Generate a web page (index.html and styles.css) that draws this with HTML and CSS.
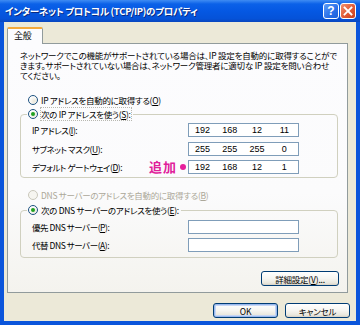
FILE: index.html
```html
<!DOCTYPE html>
<html>
<head>
  <title>インターネット プロトコル (TCP/IP)のプロパティ</title>
  <link rel="stylesheet" href="styles.css">
</head>
<body>
  <div class="window">
    <div class="titlebar">
      <span class="title">インターネット プロトコル (TCP/IP)のプロパティ</span>
      <div class="title-buttons">
        <span class="tb-button help">?</span>
        <span class="tb-button close">
          <svg width="10" height="10" viewBox="0 0 10 10"><path d="M1.5 1.5 L8.5 8.5 M8.5 1.5 L1.5 8.5" stroke="#fff" stroke-width="1.8" stroke-linecap="square"/></svg>
        </span>
      </div>
    </div>

    <div class="client">
      <div class="tabs">
        <span class="tab active">全般</span>
      </div>

      <div class="panel">
        <p class="intro">ネットワークでこの機能がサポートされている場合は、IP 設定を自動的に取得することがで<br>きます。サポートされていない場合は、ネットワーク管理者に適切な IP 設定を問い合わせ<br>てください。</p>

        <div class="radio-row first">
          <span class="radio"></span>
          <span>IP アドレスを自動的に取得する(<u>O</u>)</span>
        </div>

        <fieldset class="group ip-group">
          <legend>
            <span class="radio checked"></span>
            <span class="focus">次の IP アドレスを使う(<u>S</u>):</span>
          </legend>
          <div class="field-row">
            <label>IP アドレス(<u>I</u>):</label>
            <div class="ip-box"><span>192</span><span>168</span><span>12</span><span>11</span></div>
          </div>
          <div class="field-row">
            <label>サブネット マスク(<u>U</u>):</label>
            <div class="ip-box"><span>255</span><span>255</span><span>255</span><span>0</span></div>
          </div>
          <div class="field-row">
            <label>デフォルト ゲートウェイ(<u>D</u>):</label>
            <span class="note">追加</span>
            <span class="note-dot"></span>
            <div class="ip-box"><span>192</span><span>168</span><span>12</span><span>1</span></div>
          </div>
        </fieldset>

        <div class="radio-row disabled dns-auto">
          <span class="radio"></span>
          <span>DNS サーバーのアドレスを自動的に取得する(<u>B</u>)</span>
        </div>

        <fieldset class="group dns-group">
          <legend>
            <span class="radio checked"></span>
            <span>次の DNS サーバーのアドレスを使う(<u>E</u>):</span>
          </legend>
          <div class="field-row">
            <label>優先 DNS サーバー(<u>P</u>):</label>
            <div class="ip-box"></div>
          </div>
          <div class="field-row">
            <label>代替 DNS サーバー(<u>A</u>):</label>
            <div class="ip-box"></div>
          </div>
        </fieldset>

        <div class="advanced-row">
          <button class="xp-button advanced">詳細設定(<u>V</u>)...</button>
        </div>
      </div>

      <div class="dialog-buttons">
        <button class="xp-button default">OK</button>
        <button class="xp-button">キャンセル</button>
      </div>
    </div>
  </div>
</body>
</html>
```

FILE: styles.css
```css
/* Windows XP style dialog */
body {
  margin: 0;
  background-color: #0b55db;
  font-family: "Noto Sans CJK JP", "Noto Sans", sans-serif;
  font-size: 8.5px;
  font-feature-settings: "palt";
  letter-spacing: -0.3px;
  color: #000;
}

.window {
  width: 360px;
  height: 325px;
  display: flex;
  flex-direction: column;
  background-color: #0b55db;
}

/* Title bar */
.titlebar {
  height: 22px;
  display: flex;
  align-items: center;
  justify-content: space-between;
  padding: 0 4px 0 5px;
  background: linear-gradient(#3f8cf3 0, #0b61e8 4px, #0558e3 50%, #0552d8 85%, #0a46be 100%);
  box-sizing: border-box;
}

.title {
  color: #fff;
  font-weight: bold;
  font-size: 9.5px;
  letter-spacing: -0.3px;
  text-shadow: 1px 1px 0 #0a2a80;
  white-space: nowrap;
}

.title-buttons {
  display: flex;
  gap: 1px;
}

.tb-button {
  width: 16px;
  height: 16px;
  box-sizing: border-box;
  border: 1px solid #fff;
  border-radius: 3px;
  display: flex;
  align-items: center;
  justify-content: center;
  color: #fff;
  font-family: "Liberation Sans", sans-serif;
  font-weight: bold;
  font-size: 12px;
  letter-spacing: 0;
}

.tb-button.help {
  background: linear-gradient(135deg, #5d9cf8, #2a6fe8 60%, #1c5fd9);
}

.tb-button.close {
  background: linear-gradient(135deg, #f0906e, #e15a36 55%, #c8401c);
}

/* Client area */
.client {
  flex: 1;
  margin: 0 4px 4px 4px;
  padding-top: 5px;
  background-color: #ece9d8;
}

.tabs {
  display: flex;
  padding-left: 3px;
}

.tab {
  width: 36px;
  height: 17px;
  box-sizing: border-box;
  margin-bottom: -1px;
  border: 1px solid #919b9c;
  border-top: 2px solid #f5a93a;
  border-bottom: none;
  border-radius: 2px 2px 0 0;
  background-color: #fcfcfe;
  padding-left: 6px;
  font-size: 9px;
  line-height: 14px;
  position: relative;
}

.panel {
  width: 341px;
  height: 250px;
  margin-left: 3px;
  box-sizing: border-box;
  border: 1px solid #919b9c;
  background: linear-gradient(#fcfcfe 0, #fbfbfc 60%, #f4f3ee 100%);
  padding: 0 9px 0 12px;
}

.intro {
  margin: 6px 0 0 0;
  line-height: 10px;
  white-space: nowrap;
  letter-spacing: -0.2px;
}

/* Radio buttons */
.radio-row {
  display: flex;
  align-items: center;
  height: 12px;
  padding-left: 8px;
  gap: 3px;
  white-space: nowrap;
}

.radio-row.first {
  margin-top: 14px;
}

.radio-row.dns-auto {
  margin-top: 10.5px;
}

.radio {
  width: 10px;
  height: 10px;
  box-sizing: border-box;
  border: 1px solid #1c5180;
  border-radius: 50%;
  background: radial-gradient(circle at 65% 65%, #e8e6da, #fff 70%);
  display: inline-block;
  position: relative;
  flex-shrink: 0;
}

.radio.checked::after {
  content: "";
  position: absolute;
  left: 2px;
  top: 2px;
  width: 4px;
  height: 4px;
  border-radius: 50%;
  background-color: #21a121;
}

.disabled {
  color: #aca899;
}

.disabled .radio {
  border-color: #cac8bb;
  background: #f6f5f0;
}

/* Group boxes */
.group {
  margin: 0;
  padding: 3px 9px 3px 6px;
  border: 1px solid #d0d0bf;
  border-radius: 4px;
  min-inline-size: 0;
}

.ip-group {
  margin-top: 2px;
}

.dns-group {
  margin-top: 3.5px;
  padding-top: 3.5px;
  padding-bottom: 5px;
}

.group legend {
  display: flex;
  align-items: center;
  gap: 3px;
  height: 12px;
  padding: 0 2px 0 1px;
  white-space: nowrap;
}

.focus {
  outline: 1px dotted #b8b8b0;
  outline-offset: 0;
}

.field-row {
  display: flex;
  align-items: center;
  height: 14px;
  padding: 0 29px 0 5px;
}

.field-row + .field-row {
  margin-top: 4.5px;
}

.field-row label {
  flex: 1;
  white-space: nowrap;
  letter-spacing: -0.45px;
}

.ip-box {
  width: 111px;
  height: 14px;
  box-sizing: border-box;
  border: 1px solid #7f9db9;
  background-color: #fff;
  display: grid;
  grid-template-columns: repeat(4, 1fr);
  align-items: center;
  text-align: center;
  line-height: 12px;
  font-family: "Liberation Sans", sans-serif;
  font-size: 9px;
  letter-spacing: 0;
}

.note {
  color: #e0209a;
  font-size: 13px;
  font-weight: bold;
  line-height: 14px;
  letter-spacing: 1px;
}

.note-dot {
  width: 6px;
  height: 6px;
  border-radius: 50%;
  background-color: #e6209c;
  margin: 0 2px 0 3px;
}

/* Buttons */
.advanced-row {
  display: flex;
  justify-content: flex-end;
  margin-top: 13px;
  margin-right: -1px;
}

.xp-button {
  height: 15px;
  box-sizing: border-box;
  border: 1px solid #003c74;
  border-radius: 3px;
  background: linear-gradient(#ffffff 0, #f6f5f1 50%, #e9e7dd 85%, #d6d0c5 100%);
  font-family: "Noto Sans CJK JP", sans-serif;
  font-feature-settings: "palt";
  font-size: 8.5px;
  letter-spacing: -0.2px;
  line-height: 12px;
  padding: 0;
  color: #000;
}

.xp-button.advanced {
  width: 78px;
}

.dialog-buttons {
  display: flex;
  justify-content: flex-end;
  gap: 7px;
  margin-top: 10px;
  padding-right: 6px;
}

.dialog-buttons .xp-button {
  width: 65px;
}

.xp-button.default {
  box-shadow: inset 0 0 0 1px #98b8ee, inset 0 0 0 2px #c6d6f4;
}
```
